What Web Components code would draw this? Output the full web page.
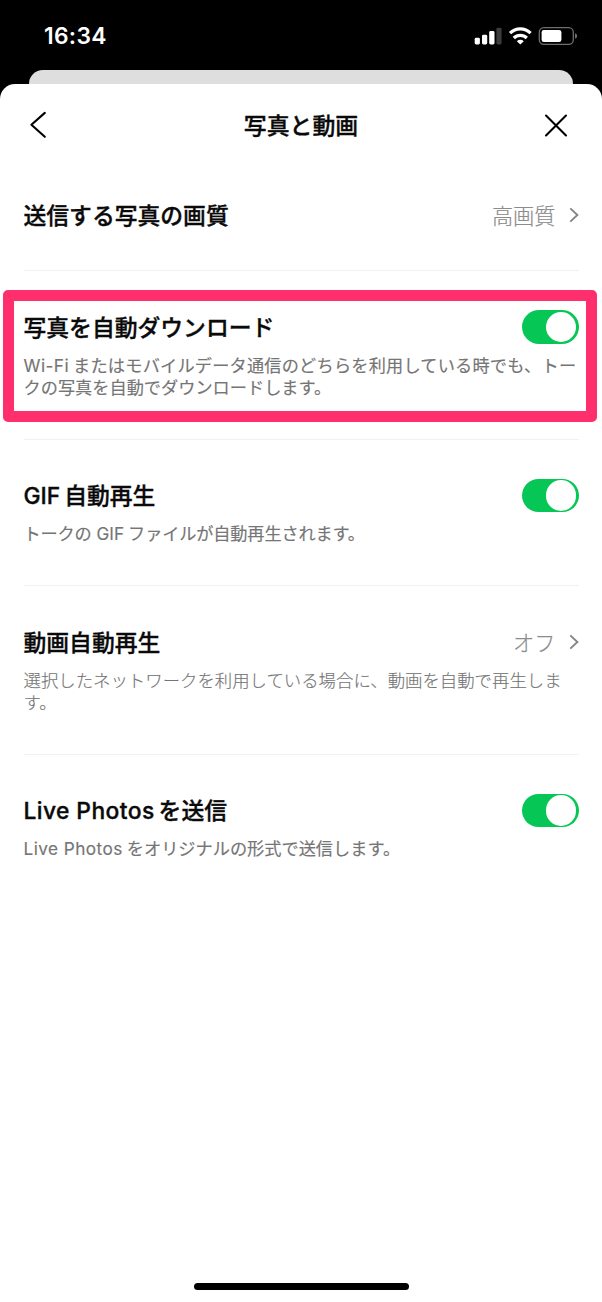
<!DOCTYPE html>
<html lang="ja">
<head>
<meta charset="utf-8">
<title>写真と動画</title>
<style>
html,body{margin:0;padding:0;background:#000}
body{width:602px;height:1302px;overflow:hidden;font-family:Inter,"Noto Sans CJK JP",sans-serif;color:#0a0a0a}
</style>
</head>
<body>
<settings-screen></settings-screen>
<script>
const define = (name, html) => customElements.define(name, class extends HTMLElement {
  constructor() {
    super();
    const t = document.createElement('template');
    t.innerHTML = html;
    this.attachShadow({mode: 'open'}).append(t.content.cloneNode(true));
  }
});

define('status-bar', `
<style>
:host{display:flex;height:70px;box-sizing:border-box;padding:0 24px 0 44px;justify-content:space-between;align-items:flex-start;color:#fff}
.time{font-size:22.8px;font-weight:600;line-height:28px;margin-top:22px;letter-spacing:.3px}
svg{display:block;margin-top:24px}
</style>
<span class="time">16:34</span>
<svg width="104" height="24" viewBox="474 24 104 24">
  <g fill="#fff"><rect x="474.7" y="37.8" width="5.2" height="6.6" rx="1.4"/><rect x="482" y="34.8" width="5.2" height="9.6" rx="1.4"/><rect x="489.2" y="31" width="5.3" height="13.4" rx="1.4"/></g>
  <rect x="496.4" y="27.8" width="5.2" height="16.6" rx="1.4" fill="#3c3c3c"/>
  <g fill="none" stroke="#fff" stroke-width="3.2"><path d="M510 33.2a14.6 14.6 0 0 1 20.6 0"/><path d="M513.8 38a9.2 9.2 0 0 1 13 0"/></g>
  <path d="M520.3 44.4l-3.5-3.2a5 5 0 0 1 7 0z" fill="#fff"/>
  <rect x="539.3" y="27.6" width="34" height="16.8" rx="4.6" fill="none" stroke="#6e6e6e" stroke-width="1.3"/>
  <rect x="541.6" y="29.9" width="19.8" height="12.2" rx="2.4" fill="#fff"/>
  <path d="M575 33.2q2.2.6 2.2 2.8t-2.2 2.8z" fill="#6e6e6e"/>
</svg>`);

define('sheet-header', `
<style>
:host{display:grid;grid-template-columns:24px 1fr 24px;align-items:center;height:83px;padding:0 34px 0 29px;box-sizing:border-box;margin-bottom:-8px}
h1{margin:0 0 0 5px;text-align:center;font-size:22.9px;font-weight:500;line-height:34px;-webkit-text-stroke:.35px #0a0a0a}
svg{display:block;margin-bottom:1px}
</style>
<svg width="24" height="28" viewBox="29 112 24 28"><path d="M44.8 113.9L31.4 125.8l13.4 12" fill="none" stroke="#000" stroke-width="2.1" stroke-linecap="round" stroke-linejoin="round"/></svg>
<h1><slot></slot></h1>
<svg width="24" height="24" viewBox="544 113 24 24"><path d="M546 115.5l20 20M566 115.5l-20 20" stroke="#000" stroke-width="2.1" stroke-linecap="round"/></svg>`);

define('toggle-switch', `
<style>
:host{display:flex;justify-content:flex-end;align-items:center;width:56.6px;height:33.6px;padding-right:2.1px;box-sizing:border-box;border-radius:17px;background:#06c755;flex:none}
i{display:block;width:30.4px;height:30.4px;border-radius:50%;background:#fff}
</style><i></i>`);

define('value-link', `
<style>
:host{display:flex;align-items:center;gap:13px;font-size:21.2px;line-height:34px;color:#8c8c8c;font-weight:300}
span{margin-top:1px;-webkit-text-stroke:.2px #8c8c8c}
svg{display:block}
</style>
<span><slot></slot></span>
<svg width="10" height="16" viewBox="0 0 10 16"><path d="M1.3 1.4L8.4 8l-7.1 6.6" fill="none" stroke="#858585" stroke-width="1.9"/></svg>`);

define('latin-text', `
<style>:host{display:inline;letter-spacing:var(--latin-spacing,0);margin:0 var(--latin-after,4px) 0 0}</style><slot></slot>`);

define('setting-row', `
<style>
:host{display:block;position:relative;margin:0 23.5px;padding:39px 0 40.5px;border-bottom:1px solid #f1f1f1}
:host([plain]){padding-bottom:38px}
:host(:last-of-type){border-bottom:0}
.head{display:flex;justify-content:space-between;align-items:center;height:34px}
h2{margin:1px 0 0;font-size:22.8px;font-weight:500;line-height:34px;white-space:nowrap;-webkit-text-stroke:.35px #0a0a0a}
.desc{font-size:17.2px;line-height:22px;color:#757575;margin:10.5px -4px -.5px 0;white-space:nowrap;-webkit-text-stroke:.15px #757575}
:host([plain]) .desc{display:none}
:host([light]) .desc{font-weight:300;font-size:17.4px}
:host([highlight])::after{content:"";position:absolute;left:-20.5px;right:-18.5px;top:19px;height:132px;box-sizing:border-box;border:11px solid #ff2e6d;border-radius:5px;pointer-events:none}
</style>
<div class="head"><h2><slot name="title"></slot></h2><slot name="control"></slot></div>
<div class="desc"><slot></slot></div>`);

define('home-indicator', `
<style>:host{display:block;width:215px;height:7px;border-radius:4px;background:#000;margin:auto auto 12px}</style>`);

define('settings-screen', `
<style>
:host{display:flex;flex-direction:column;width:602px;height:1302px;background:#000}
.back{height:29px;margin:0 29px;border-radius:14px 14px 0 0;background:#dedede;flex:none}
.sheet{display:flex;flex-direction:column;flex:1;margin-top:-15px;border-radius:15px 15px 0 0;background:#fff}
</style>
<status-bar></status-bar>
<div class="back"></div>
<div class="sheet">
  <sheet-header>写真と動画</sheet-header>
  <setting-row plain><span slot="title">送信する写真の画質</span><value-link slot="control">高画質</value-link></setting-row>
  <setting-row highlight><span slot="title">写真を自動ダウンロード</span><toggle-switch slot="control"></toggle-switch><span style="letter-spacing:.2px"><latin-text style="--latin-spacing:.45px">Wi-Fi</latin-text>またはモバイルデータ通信のどちらを利用している時でも、トー</span><br>クの写真を自動でダウンロードします。</setting-row>
  <setting-row><span slot="title"><latin-text>GIF</latin-text>自動再生</span><toggle-switch slot="control"></toggle-switch><span style="letter-spacing:-.15px">トークの<latin-text>GIF</latin-text>ファイルが自動再生されます。</span></setting-row>
  <setting-row light><span slot="title">動画自動再生</span><value-link slot="control">オフ</value-link>選択したネットワークを利用している場合に、動画を自動で再生しま<br>す。</setting-row>
  <setting-row><span slot="title"><latin-text style="--latin-spacing:.42px">Live Photos</latin-text>を送信</span><toggle-switch slot="control"></toggle-switch><latin-text style="--latin-spacing:.45px">Live Photos</latin-text>をオリジナルの形式で送信します。</setting-row>
  <home-indicator></home-indicator>
</div>`);
</script>
</body>
</html>
